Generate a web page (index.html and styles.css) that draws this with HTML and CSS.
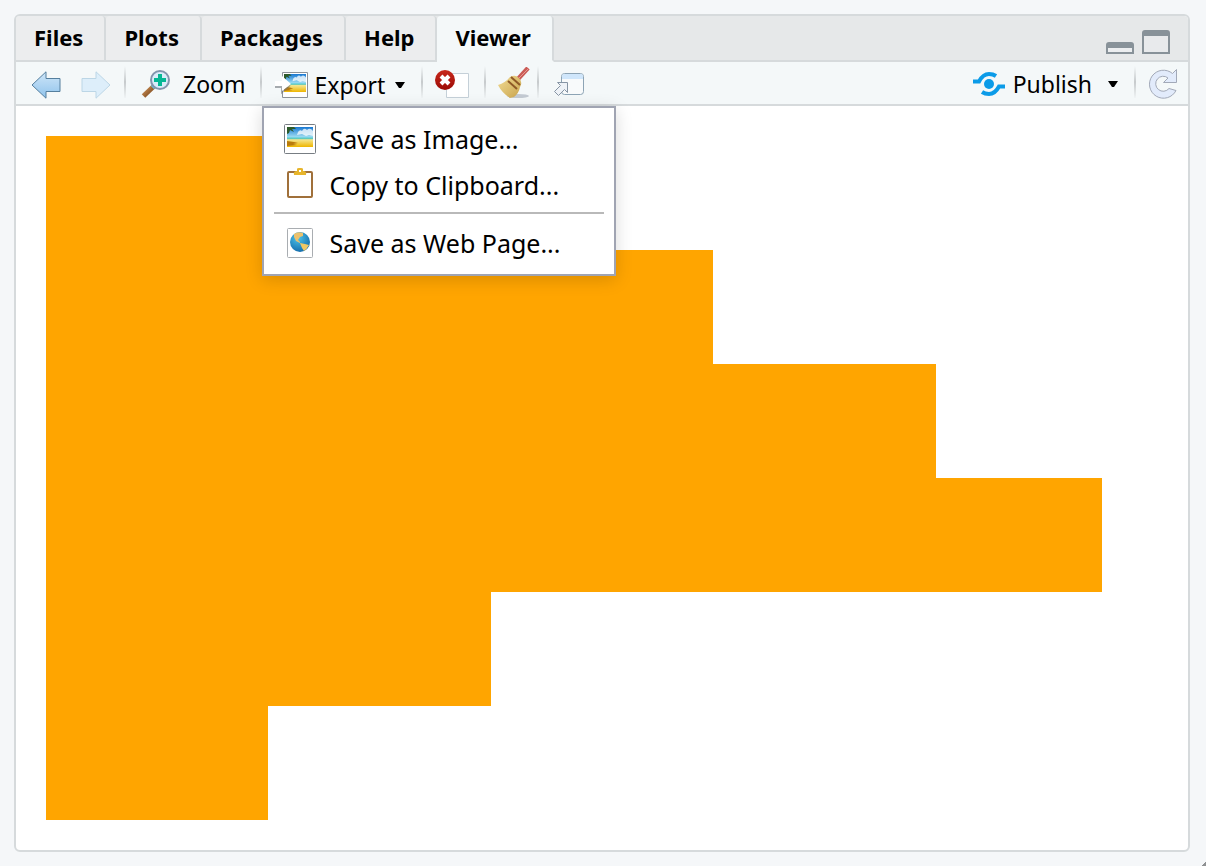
FILE: index.html
```html
<!DOCTYPE html>
<html lang="en">
<head>
<meta charset="utf-8">
<title>Viewer</title>
<link rel="stylesheet" href="styles.css">
</head>
<body>
<svg class="defs" aria-hidden="true">
  <defs>
    <linearGradient id="blue" x1="0" y1="0" x2="0" y2="1"><stop offset="0" stop-color="#cfe6f8"/><stop offset="1" stop-color="#8fc3ec"/></linearGradient>
    <linearGradient id="sky" x1="0" y1="0" x2="0" y2="1"><stop offset="0" stop-color="#1777d2"/><stop offset=".5" stop-color="#9ddcf2"/><stop offset=".56" stop-color="#3ec3c8"/><stop offset=".64" stop-color="#f5e58c"/><stop offset="1" stop-color="#eeb500"/></linearGradient>
    <linearGradient id="handle" x1="0" y1="0" x2="1" y2="1"><stop offset="0" stop-color="#d69a60"/><stop offset="1" stop-color="#6f3c12"/></linearGradient>
    <linearGradient id="straw" x1="0" y1="0" x2="1" y2="1"><stop offset="0" stop-color="#f2dc95"/><stop offset="1" stop-color="#c9a44c"/></linearGradient>
    <radialGradient id="globe" cx=".4" cy=".3" r=".8"><stop offset="0" stop-color="#4cc4ea"/><stop offset="1" stop-color="#0d62a5"/></radialGradient>
    <linearGradient id="red" x1="0" y1="0" x2="0" y2="1"><stop offset="0" stop-color="#c8281c"/><stop offset="1" stop-color="#9c0b05"/></linearGradient>
    <symbol id="photo" viewBox="0 0 26 20" preserveAspectRatio="none">
      <path d="M0 0h26v20H0z" fill="url(#sky)"/>
      <path d="M11 5q2-3 4-1q2-4 5-1q3-3 6 1v5l-4-1-3 1-4-2-5 1z" fill="#fff" opacity=".75"/>
      <path d="M0 0h7l2 2-4 0 2 3-4-2-1 3-2 1z" fill="#2c5a2b"/>
      <path d="M0 14l7 1 4 1-5 1 4 1-10 1z" fill="#b97b0d"/>
    </symbol>
  </defs>
</svg>
<main class="pane">
  <header class="tabbar">
    <nav class="tabs" role="tablist">
      <button class="tab" role="tab">Files</button>
      <button class="tab" role="tab">Plots</button>
      <button class="tab" role="tab">Packages</button>
      <button class="tab" role="tab">Help</button>
      <button class="tab active" role="tab" aria-selected="true">Viewer</button>
    </nav>
    <div class="window-controls">
      <button aria-label="Minimize"><svg width="28" height="12" viewBox="0 0 28 12"><path d="M1 11V3q0-2 2-2h22q2 0 2 2v8z" fill="#eceef0" stroke="#889299" stroke-width="2"/><path d="M1 6V3q0-2 2-2h22q2 0 2 2v3z" fill="#889299"/></svg></button>
      <button aria-label="Maximize"><svg width="28" height="24" viewBox="0 0 28 24"><path d="M1 23V3q0-2 2-2h22q2 0 2 2v20z" fill="#e8eaec" stroke="#889299" stroke-width="2"/><path d="M1 6V3q0-2 2-2h22q2 0 2 2v3z" fill="#889299"/></svg></button>
    </div>
  </header>
  <div class="toolbar">
    <div class="group nav-group">
      <button class="tool" aria-label="Back"><svg width="30" height="28" viewBox="0 0 30 28"><path d="M1 14L15 .8V7.500h14v13H15v6.700z" fill="url(#blue)" stroke="#557f9e"/></svg></button>
      <button class="tool" aria-label="Forward"><svg width="30" height="28" viewBox="0 0 30 28"><path d="M29 14L15 .8V7.500H1v13h14v6.700z" fill="#ddeefa" stroke="#bcd6e6"/></svg></button>
    </div>
    <div class="group zoom-group">
      <button class="tool"><svg width="30" height="30" viewBox="0 0 30 30"><path d="M2.500 27L13 17" stroke="url(#handle)" stroke-width="5"/><path d="M11 16l3 3" stroke="#62c7ea" stroke-width="3"/><circle cx="19" cy="11" r="9" fill="#d9ecfa" stroke="#8295ae" stroke-width="2"/><path d="M19 5v12M13 11h12" stroke="#05b795" stroke-width="4"/></svg><span>Zoom</span></button>
    </div>
    <div class="group export-group">
      <button class="tool export" aria-haspopup="menu" aria-expanded="true"><svg width="34" height="28" viewBox="0 0 34 28"><path d="M7.500 1.500h25v25h-25z" fill="#fff" stroke="#8d9298"/><use href="#photo" x="9" y="3" width="22" height="18"/><path d="M0 16h7v5l8-7" fill="none" stroke="#70767b" stroke-width="2" opacity=".6"/><path d="M0 10h7V5l9 8-9 7v-5H0z" fill="#fff"/></svg><span>Export</span><svg class="caret" width="10" height="6" viewBox="0 0 10 6"><path d="M0 0h10L6 6H4z"/></svg></button>
      <div class="menu" role="menu">
        <button role="menuitem"><svg width="32" height="30" viewBox="0 0 32 30"><rect x=".5" y=".5" width="31" height="29" rx="1" fill="#fff" stroke="#777d83"/><use href="#photo" x="3" y="3" width="26" height="20"/></svg><span>Save as Image...</span></button>
        <button role="menuitem"><svg width="32" height="34" viewBox="0 0 32 34"><rect x="4" y="4" width="24" height="25" rx="1" fill="#fff" stroke="#a0703a" stroke-width="2"/><path d="M10 7q-1-4 3-4V1q0-1 2-1h2q2 0 2 1v2q4 0 3 4z" fill="#e7b52c"/><path d="M15 2h2v2h-2z" fill="#fff"/></svg><span>Copy to Clipboard...</span></button>
        <hr>
        <button role="menuitem"><svg width="32" height="30" viewBox="0 0 32 30"><rect x="3.500" y=".5" width="25" height="29" rx="1" fill="#fff" stroke="#a9adb1"/><circle cx="16" cy="14" r="10" fill="url(#globe)"/><path d="M10 6q4-3 9-1l0 3-3 1-2 3 2 2 0 1-4-2-2-4z" fill="#ebc16d"/><path d="M16 15l5 1 4 1q-2 4-5 6l-2-3z" fill="#f0c865"/></svg><span>Save as Web Page...</span></button>
      </div>
    </div>
    <div class="group remove-group"><button class="tool" aria-label="Remove"><svg width="34" height="30" viewBox="0 0 34 30"><path d="M11.500 4.500h22v24h-22z" fill="#fff" stroke="#c5d0d8"/><circle cx="10" cy="11" r="10" fill="url(#red)"/><path d="M6 7l8 8M14 7l-8 8" stroke="#fff" stroke-width="4"/></svg></button></div>
    <div class="group clear-group"><button class="tool" aria-label="Clear all"><svg width="32" height="32" viewBox="0 0 32 32"><ellipse cx="20" cy="29" rx="11" ry="2" fill="#c3cad2"/><path d="M20 12L30 1" stroke="#ca5b56" stroke-width="4.500"/><path d="M21 11L31 1" stroke="#e69992"/><path d="M12 10q5-3 9 1t1 9q-1 6-6 10l-4 1Q4 26 0 18q7-2 12-8z" fill="url(#straw)"/><path d="M13 10l9 8M10 14l9 8" stroke="#8f5a26" stroke-width="2"/></svg></button></div>
    <div class="group popout-group"><button class="tool" aria-label="Show in new window"><svg width="32" height="24" viewBox="0 0 32 24"><rect x="8.500" y="1.500" width="22" height="21" rx="3" fill="#f8fafb" stroke="#8da4b5"/><path d="M9 7V4q0-2 2-2h17q2 0 2 2v3z" fill="#cfe6fb"/><path d="M1.500 19.500l6-6-3-3h10v10l-3-3-6 6z" fill="#eef2f7" stroke="#8694a4"/></svg></button></div>
    <div class="group publish-group"><button class="tool"><svg width="32" height="26" viewBox="0 0 32 26"><circle cx="16" cy="13" r="5" fill="#0b9be8"/><path d="M0 10.500h6Q10 3 16 3q4 0 7 2M32 15.500h-6Q22 23 16 23q-4 0-7-2" fill="none" stroke="#0b9be8" stroke-width="4"/></svg><span>Publish</span><svg class="caret" width="10" height="6" viewBox="0 0 10 6"><path d="M0 0h10L6 6H4z"/></svg></button></div>
    <div class="group refresh-group"><button class="tool" aria-label="Refresh"><svg width="30" height="32" viewBox="0 0 30 32"><path d="M28.500 1.500v13H15.500l4.500-4.500A7.500 7.500 0 1 0 21 20.500l7 2A14 14 0 1 1 24.500 5.500z" fill="#e2ebfb" stroke="#a2a9b8" stroke-linejoin="round"/></svg></button></div>
  </div>
  <section class="chart" aria-label="Bar chart">
    <div class="bar" style="width:30%"></div>
    <div class="bar" style="width:60%"></div>
    <div class="bar" style="width:80%"></div>
    <div class="bar" style="width:95%"></div>
    <div class="bar" style="width:40%"></div>
    <div class="bar" style="width:20%"></div>
  </section>
</main>
</body>
</html>
```
FILE: styles.css
```css
* { box-sizing: border-box; }
body {
  margin: 0;
  min-height: 100vh;
  padding: 14px 16px 14px 14px;
  display: flex;
  background: #f5f7f9;
  color: #000;
  font: 23px/32px "Noto Sans", "Open Sans", sans-serif;
}
/* resize grip in the window corner */
body::after {
  content: "";
  position: fixed;
  right: 0;
  bottom: 0;
  width: 4px;
  height: 4px;
  background: linear-gradient(135deg, transparent 40%, #8f9193 40%);
}
.defs { position: absolute; width: 0; height: 0; }
button { margin: 0; padding: 0; border: 0; background: none; color: inherit; font: inherit; }
svg { display: block; flex: none; }
.pane {
  flex: 1;
  display: flex;
  flex-direction: column;
  border: 2px solid #d6dadc;
  border-radius: 6px;
  background: #fff;
}
.tabbar {
  display: flex;
  justify-content: space-between;
  height: 46px;
  border-bottom: 2px solid #d6dadc;
  border-radius: 4px 4px 0 0;
  background: #e6e8e9;
}
.tabs { display: flex; height: 46px; }
.tab {
  padding: 0 21px 2px 18px;
  border-right: 2px solid #d6dadc;
  border-bottom: 2px solid #d6dadc;
  border-radius: 4px 4px 0 0;
  background: #ecedee;
  font-size: 22px;
  font-weight: 700;
}
.tab.active { border-bottom-color: #f4f8f9; background: #f4f8f9; }
.window-controls { display: flex; align-items: flex-end; gap: 8px; padding: 0 18px 6px 0; }
.toolbar {
  display: flex;
  height: 44px;
  border-bottom: 2px solid #d6dadc;
  background: #f4f8f9;
}
.group { position: relative; display: flex; align-items: center; }
.group + .group::before {
  content: "";
  align-self: flex-start;
  width: 2px;
  height: 32px;
  margin-top: 4px;
  background: linear-gradient(#f4f8f9, #c6cacc 50%, #f0f4f5);
}
.tool { display: flex; align-items: center; padding-top: 2px; }
.nav-group { gap: 20px; padding: 2px 13px 0 15px; }
.zoom-group .tool { gap: 12px; padding-left: 15px; padding-right: 14px; }
.export-group .tool { gap: 6px; padding-top: 4px; padding-left: 13px; padding-right: 16px; }
.export-group .caret { margin-left: 4px; }
.remove-group .tool { padding-left: 12px; padding-right: 15px; }
.clear-group .tool { padding-top: 0; padding-left: 12px; padding-right: 7px; }
.popout-group .tool { padding-left: 14px; }
.popout-group { margin-right: auto; }
.group.publish-group::before { display: none; }
.publish-group .tool { gap: 8px; padding-right: 16px; }
.publish-group .caret { margin-left: 8px; }
.refresh-group .tool { padding-left: 12px; padding-right: 10px; }
.menu {
  position: absolute;
  z-index: 1;
  top: 44px;
  left: 2px;
  width: 354px;
  padding: 8px 10px;
  border: 2px solid #a0a4b2;
  background: #fff;
  box-shadow: 0 4px 16px rgba(0, 0, 0, .15);
  font-size: 25px;
}
.menu button {
  display: flex;
  align-items: center;
  gap: 14px;
  width: 100%;
  height: 46px;
  padding: 0 10px;
  white-space: nowrap;
}
.menu hr { margin: 4px 0 6px; border: 0; border-top: 2px solid #b9b9b9; }
.chart { flex: 1; display: flex; flex-direction: column; padding: 30px; }
.bar { flex: 1; background: #ffa500; }
```
